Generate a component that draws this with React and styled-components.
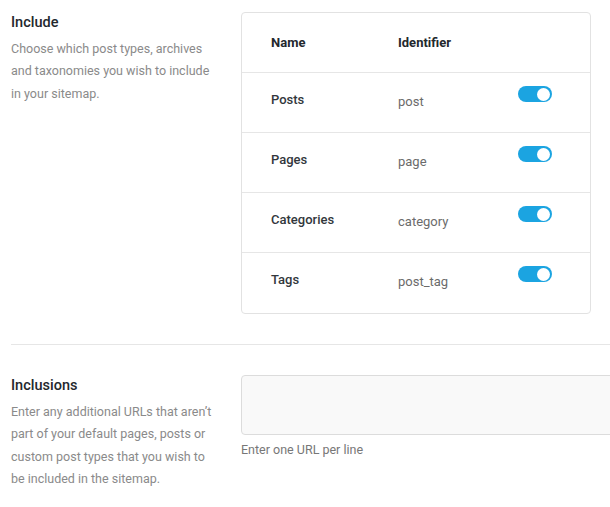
import styled, { createGlobalStyle } from "styled-components";

const GlobalStyle = createGlobalStyle`
  body {
    margin: 0;
    background: #ffffff;
    font-family: Roboto, "Noto Sans", sans-serif;
    -webkit-font-smoothing: antialiased;
  }
`;

const Page = styled.div`
  width: 610px;
  overflow: hidden;
  padding: 12px 0 0 11px;
  box-sizing: border-box;
`;

const Section = styled.section`
  display: grid;
  grid-template-columns: 230px 1fr;
  align-items: start;
  padding-bottom: ${(props) => props.$bottom || 0}px;
  border-bottom: ${(props) => (props.$divider ? "1px solid #e6e6e6" : "none")};
`;

const Intro = styled.div`
  width: 204px;
  padding-top: ${(props) => props.$top || 0}px;
`;

const Heading = styled.h2`
  margin: 0 0 5px;
  font-size: 14.5px;
  font-weight: 500;
  line-height: 20px;
  color: #23282d;
`;

const Description = styled.p`
  margin: 0;
  font-size: 12.5px;
  line-height: 22.3px;
  color: #8a8a8a;
`;

const Card = styled.div`
  width: 350px;
  padding-bottom: 1px;
  border: 1px solid #e2e2e2;
  border-radius: 4px;
  box-sizing: border-box;
`;

const Row = styled.div`
  display: grid;
  grid-template-columns: 127px 120px 1fr;
  height: ${(props) => (props.$head ? 59 : 60)}px;
  padding: ${(props) => (props.$head ? "0" : "13px")} 0 0 29px;
  box-sizing: border-box;
  align-items: ${(props) => (props.$head ? "center" : "start")};
  border-top: ${(props) => (props.$head ? "none" : "1px solid #e6e6e6")};
`;

const HeadCell = styled.span`
  font-size: 13px;
  font-weight: 700;
  color: #23282d;
`;

const NameCell = styled.span`
  margin-top: 4px;
  font-size: 13px;
  font-weight: 500;
  line-height: 20px;
  color: #32373c;
`;

const IdCell = styled.span`
  margin-top: 6px;
  font-size: 13px;
  line-height: 20px;
  color: #6b6b6b;
`;

const Toggle = styled.span`
  display: flex;
  justify-content: ${(props) => (props.$on ? "flex-end" : "flex-start")};
  align-items: center;
  width: 34px;
  height: 16px;
  padding: 0 2px;
  box-sizing: border-box;
  border-radius: 8px;
  background: ${(props) => (props.$on ? "#1ba4e1" : "#cccccc")};
`;

const Knob = styled.span`
  width: 13px;
  height: 13px;
  border-radius: 50%;
  background: #ffffff;
`;

const Field = styled.div`
  padding-top: 30px;
`;

const TextArea = styled.div`
  width: 400px;
  height: 60px;
  border: 1px solid #dcdcdc;
  border-radius: 4px;
  background: #f9f9f9;
  box-sizing: border-box;
`;

const Help = styled.p`
  margin: 7px 0 0;
  font-size: 12.5px;
  line-height: 16px;
  color: #777777;
`;

const types = [
  { name: "Posts", id: "post" },
  { name: "Pages", id: "page" },
  { name: "Categories", id: "category" },
  { name: "Tags", id: "post_tag" },
];

export default function App() {
  return (
    <>
      <GlobalStyle />
      <Page>
        <Section $divider $bottom={30}>
          <Intro $top={1}>
            <Heading>Include</Heading>
            <Description>
              Choose which post types, archives and taxonomies you wish to
              include in your sitemap.
            </Description>
          </Intro>
          <Card>
            <Row $head>
              <HeadCell>Name</HeadCell>
              <HeadCell>Identifier</HeadCell>
              <span />
            </Row>
            {types.map((t) => (
              <Row key={t.id}>
                <NameCell>{t.name}</NameCell>
                <IdCell>{t.id}</IdCell>
                <Toggle $on>
                  <Knob />
                </Toggle>
              </Row>
            ))}
          </Card>
        </Section>
        <Section>
          <Intro $top={31}>
            <Heading>Inclusions</Heading>
            <Description>
              Enter any additional URLs that aren’t part of your default pages,
              posts or custom post types that you wish to be included in the
              sitemap.
            </Description>
          </Intro>
          <Field>
            <TextArea />
            <Help>Enter one URL per line</Help>
          </Field>
        </Section>
      </Page>
    </>
  );
}
